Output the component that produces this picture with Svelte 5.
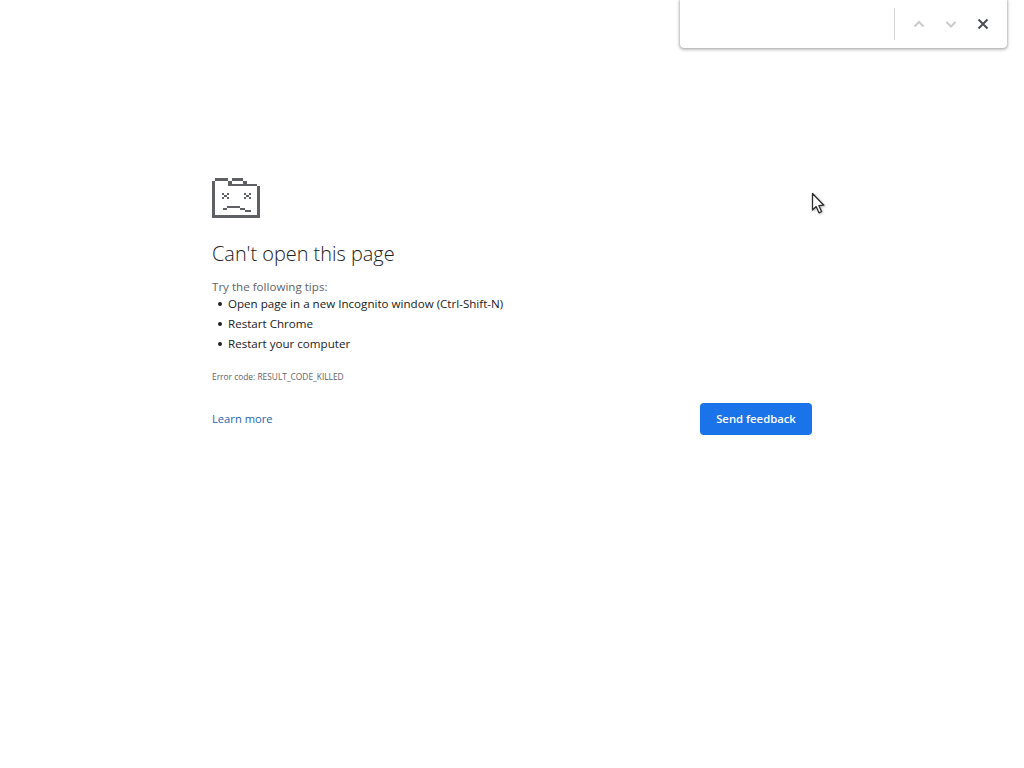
<script>
  const tips = [
    'Open page in a new Incognito window (Ctrl-Shift-N)',
    'Restart Chrome',
    'Restart your computer'
  ];
</script>

<div class="find-bar">
  <div class="find-input"></div>
  <div class="find-divider"></div>
  <div class="find-buttons">
    <svg width="32" height="24" viewBox="0 0 32 24" fill="none" stroke="#c9cbce" stroke-width="2">
      <path d="M11.5 14.5 L16 10 L20.5 14.5" />
    </svg>
    <svg width="32" height="24" viewBox="0 0 32 24" fill="none" stroke="#c9cbce" stroke-width="2">
      <path d="M11.5 10 L16 14.5 L20.5 10" />
    </svg>
    <svg width="32" height="24" viewBox="0 0 32 24" fill="none" stroke="#4a4d51" stroke-width="2">
      <path d="M11.5 7.5 L20.5 16.5 M20.5 7.5 L11.5 16.5" />
    </svg>
  </div>
</div>

<main class="page">
  <div class="wrapper">
    <svg class="sad-tab" width="48" height="40" viewBox="0 0 48 40" fill="#5f6063">
      <!-- folder outline -->
      <path d="M0 3h3v37h-3z M3 0h13v3h-13z M20 0h11v3h-11z M16 3h4v5h-4z M18 6h27v2h-27z M31 3h4v3h-4z M45 8h3v32h-3z M0 37h48v3h-48z" />
      <!-- eyes -->
      <path d="M10 15h2v2h-2z M15 15h2v2h-2z M12 17h3v2h-3z M10 19h2v2h-2z M15 19h2v2h-2z" />
      <path d="M32 15h2v2h-2z M37 15h2v2h-2z M34 17h3v2h-3z M32 19h2v2h-2z M37 19h2v2h-2z" />
      <!-- mouth -->
      <path d="M11 30h4v2h-4z M15 28h13v2h-13z M28 30h5v2h-5z M33 32h6v2h-6z" />
    </svg>

    <h1>Can't open this page</h1>

    <p class="tips-title">Try the following tips:</p>
    <ul>
      {#each tips as tip}
        <li>{tip}</li>
      {/each}
    </ul>

    <div class="error-code">Error code: RESULT_CODE_KILLED</div>

    <div class="actions">
      <a href="#learn" class="learn">Learn more</a>
      <button class="feedback">Send feedback</button>
    </div>
  </div>
</main>

<svg class="cursor" width="16" height="24" viewBox="0 0 16 24">
  <path d="M1.500 1.500 V18 L5.200 14.600 L8 20.800 L10.600 19.500 L7.900 13.700 L12.800 13.200 Z" fill="#fff" stroke="#2c2c2c" stroke-width="1.300" stroke-linejoin="round" />
</svg>

<style>
  :global(body) {
    margin: 0;
    background: #fff;
    font-family: "Open Sans", "Noto Sans", sans-serif;
  }

  .page {
    display: flex;
    justify-content: center;
    padding-top: 178px;
  }

  .wrapper {
    width: 600px;
  }

  .sad-tab {
    display: block;
  }

  h1 {
    margin: 22px 0 0;
    font-size: 19.9px;
    line-height: 28px;
    font-weight: 300;
    color: #202124;
  }

  .tips-title {
    margin: 11px 0 0;
    font-size: 11.6px;
    line-height: 15px;
    color: #5f6368;
  }

  ul {
    margin: 0;
    padding: 0 0 0 16px;
    list-style: none;
    font-size: 11.6px;
    line-height: 20px;
    color: #202124;
  }

  li {
    display: flex;
    align-items: center;
  }

  li::before {
    content: '';
    width: 4px;
    height: 4px;
    margin-left: -10px;
    margin-right: 6px;
    border-radius: 50%;
    background: #202124;
  }

  .error-code {
    margin-top: 16px;
    font-size: 8.4px;
    line-height: 14px;
    color: #5f6368;
  }

  .actions {
    display: flex;
    justify-content: space-between;
    align-items: center;
    margin-top: 19px;
  }

  .learn {
    font-size: 11.2px;
    line-height: 24px;
    color: #1f64b4;
    text-decoration: none;
  }

  .feedback {
    width: 112px;
    height: 32px;
    padding: 0 0 2px;
    border: 0;
    border-radius: 4px;
    background: #1a73e8;
    color: #fff;
    font-family: inherit;
    font-size: 11.3px;
    font-weight: 600;
  }

  .find-bar {
    position: absolute;
    top: 0;
    left: 680px;
    width: 327px;
    height: 48px;
    box-sizing: border-box;
    display: flex;
    align-items: center;
    background: #fff;
    border-radius: 0 0 4px 4px;
    box-shadow: 0 1px 3px 1px rgba(60, 64, 67, 0.35), 0 0 1px rgba(60, 64, 67, 0.4);
  }

  .find-input {
    flex: 1;
  }

  .find-divider {
    width: 1px;
    height: 32px;
    margin-top: -1px;
    background: #d5d7d9;
  }

  .find-buttons {
    display: flex;
    padding: 0 8px;
  }

  .cursor {
    position: absolute;
    left: 811px;
    top: 192px;
    filter: drop-shadow(1px 1px 1px rgba(0, 0, 0, 0.25));
  }
</style>
